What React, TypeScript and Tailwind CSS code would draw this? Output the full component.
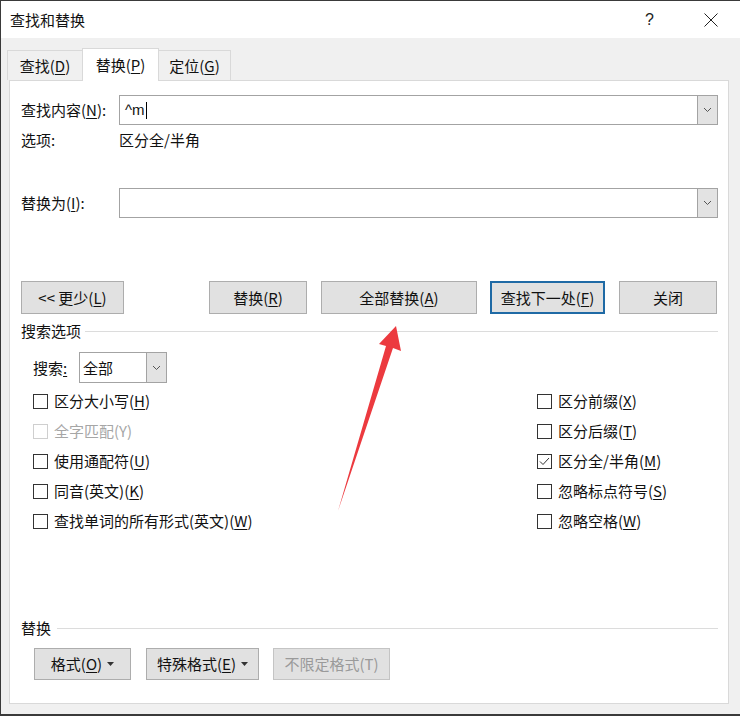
import React from 'react';

const FONT = "font-['Microsoft_YaHei_UI','Noto_Sans_CJK_SC',sans-serif]";

const Key: React.FC<{ k: string }> = ({ k }) => <span className="underline underline-offset-2">{k}</span>;

const Chevron = () => (
  <svg width="9" height="6" viewBox="0 0 9 6" fill="none">
    <path d="M1 1l3.5 3.5L8 1" stroke="#555" strokeWidth="1" />
  </svg>
);

const Caret = () => (
  <svg width="7" height="4" viewBox="0 0 7 4" className="ml-[5px]">
    <path d="M0 0h7L3.5 4z" fill="#333" />
  </svg>
);

const Btn: React.FC<{ w: string; children: React.ReactNode; focused?: boolean; disabled?: boolean; className?: string }> = ({
  w,
  children,
  focused,
  disabled,
  className = '',
}) => (
  <div
    className={`${w} h-full flex items-center justify-center bg-[#e1e1e1] ${
      focused ? 'border-2 border-[#1f6aa5]' : disabled ? 'border border-[#c4c4c4] text-[#9a9a9a]' : 'border border-[#adadad]'
    } ${className}`}
  >
    {children}
  </div>
);

const Check: React.FC<{ label: React.ReactNode; checked?: boolean; disabled?: boolean }> = ({ label, checked, disabled }) => (
  <div className={`flex items-center h-[30px] ${disabled ? 'text-[#a6a6a6]' : ''}`}>
    <div
      className={`w-[15px] h-[15px] flex items-center justify-center bg-white border ${
        disabled ? 'border-[#cfcfcf]' : 'border-[#333]'
      }`}
    >
      {checked && (
        <svg width="11" height="9" viewBox="0 0 11 9" fill="none">
          <path d="M1 4.5l3 3L10 1" stroke="#333" strokeWidth="1" />
        </svg>
      )}
    </div>
    <span className="ml-[6px]">{label}</span>
  </div>
);

const rows: [React.ReactNode, React.ReactNode, boolean?, boolean?][] = [
  [<>区分大小写(<Key k="H" />)</>, <>区分前缀(<Key k="X" />)</>],
  [<>全字匹配(Y)</>, <>区分后缀(<Key k="T" />)</>, true],
  [<>使用通配符(<Key k="U" />)</>, <>区分全/半角(<Key k="M" />)</>, false, true],
  [<>同音(英文)(<Key k="K" />)</>, <>忽略标点符号(<Key k="S" />)</>],
  [<>查找单词的所有形式(英文)(<Key k="W" />)</>, <>忽略空格(<Key k="W" />)</>],
];

export default function App() {
  return (
    <div
      className={`relative w-[740px] h-[716px] overflow-hidden bg-[#f0f0f0] border-t border-l border-b-2 border-[#3a3a3a] text-[15px] leading-[20px] text-[#111] ${FONT}`}
    >
      {/* title bar */}
      <div className="h-[37px] bg-white flex items-center pl-[9px]">
        <span className="text-[15px]">查找和替换</span>
        <span className="ml-auto text-[16px] text-[#222] mr-[50px] font-['Liberation_Sans',sans-serif]">?</span>
        <svg width="14" height="14" viewBox="0 0 14 14" className="mr-[22px]">
          <path d="M0.5 0.5l13 13M13.5 0.5l-13 13" stroke="#222" strokeWidth="1" />
        </svg>
      </div>

      {/* tabs */}
      <div className="mt-[10px] h-[32px] pl-[6px] flex items-end">
        <div className="w-[76px] h-[30px] flex items-center justify-center border border-b-0 border-[#d9d9d9] bg-[#f0f0f0]">
          查找(<Key k="D" />)
        </div>
        <div className="-ml-px w-[77px] h-[33px] -mb-px relative z-10 flex items-start pt-[6px] justify-center border border-b-0 border-[#d9d9d9] bg-white">
          替换(<Key k="P" />)
        </div>
        <div className="-ml-px w-[73px] h-[30px] flex items-center justify-center border border-b-0 border-[#d9d9d9] bg-[#f0f0f0]">
          定位(<Key k="G" />)
        </div>
      </div>

      {/* panel */}
      <div className="ml-[8px] w-[720px] h-[624px] border border-[#d9d9d9] bg-white pl-[11px] pr-[10px] flex flex-col">
        <div className="mt-[14px] h-[30px] flex items-center">
          <span className="w-[98px]">
            查找内容(<Key k="N" />):
          </span>
          <div className="flex-1 h-full flex">
            <div className="flex-1 border border-r-0 border-[#a3a3a3] flex items-center pl-[5px] font-['Liberation_Sans',sans-serif] text-[15px]">
              ^m<span className="inline-block w-px h-[17px] bg-black ml-[1px]" />
            </div>
            <div className="w-[21px] border border-[#a3a3a3] bg-[#e3e3e3] flex items-center justify-center">
              <Chevron />
            </div>
          </div>
        </div>
        <div className="mt-[5px] h-[20px] flex items-center">
          <span className="w-[98px]">选项:</span>
          <span>区分全/半角</span>
        </div>

        <div className="mt-[38px] h-[30px] flex items-center">
          <span className="w-[98px]">
            替换为(<Key k="I" />):
          </span>
          <div className="flex-1 h-full flex">
            <div className="flex-1 border border-r-0 border-[#a3a3a3]" />
            <div className="w-[21px] border border-[#a3a3a3] bg-[#e3e3e3] flex items-center justify-center">
              <Chevron />
            </div>
          </div>
        </div>

        <div className="mt-[63px] h-[33px] flex">
          <Btn w="w-[103px]">
            &lt;&lt;&nbsp;更少(<Key k="L" />)
          </Btn>
          <Btn w="w-[98px]" className="ml-[85px]">
            替换(<Key k="R" />)
          </Btn>
          <Btn w="w-[156px]" className="ml-[14px]">
            全部替换(<Key k="A" />)
          </Btn>
          <Btn w="w-[115px]" className="ml-[13px]" focused>
            查找下一处(<Key k="F" />)
          </Btn>
          <Btn w="w-[98px]" className="ml-[14px]">
            关闭
          </Btn>
        </div>

        <div className="mt-[8px] h-[18px] flex items-center">
          <span>搜索选项</span>
          <div className="flex-1 h-px bg-[#dcdcdc] ml-[4px]" />
        </div>

        <div className="mt-[12px] h-[31px] flex items-center pl-[12px]">
          <span className="w-[46px]">
            搜索<span className="underline underline-offset-2">:</span>
          </span>
          <div className="w-[88px] h-full flex">
            <div className="flex-1 border border-r-0 border-[#a3a3a3] flex items-center pl-[3px]">全部</div>
            <div className="w-[21px] border border-[#a3a3a3] bg-[#e3e3e3] flex items-center justify-center">
              <Chevron />
            </div>
          </div>
        </div>

        <div className="mt-[3px] pl-[12px] flex flex-col">
          {rows.map(([l, r, dis, chk], i) => (
            <div key={i} className="grid grid-cols-[504px_1fr]">
              <Check label={l} disabled={dis} />
              <Check label={r} checked={chk} />
            </div>
          ))}
        </div>

        <div className="mt-[83px] h-[18px] flex items-center">
          <span>替换</span>
          <div className="flex-1 h-px bg-[#dcdcdc] ml-[6px]" />
        </div>

        <div className="mt-[11px] h-[32px] flex pl-[13px]">
          <Btn w="w-[97px]">
            格式(<Key k="O" />)
            <Caret />
          </Btn>
          <Btn w="w-[113px]" className="ml-[15px]">
            特殊格式(<Key k="E" />)
            <Caret />
          </Btn>
          <Btn w="w-[117px]" className="ml-[14px]" disabled>
            不限定格式(T)
          </Btn>
        </div>
      </div>

      {/* red annotation arrow */}
      <svg className="absolute left-0 top-0 pointer-events-none" width="740" height="716" viewBox="0 0 740 716">
        <polygon points="395,325 400,350 392,347 337,510 385,345 378,343" fill="#ec3a3f" />
      </svg>
    </div>
  );
}
